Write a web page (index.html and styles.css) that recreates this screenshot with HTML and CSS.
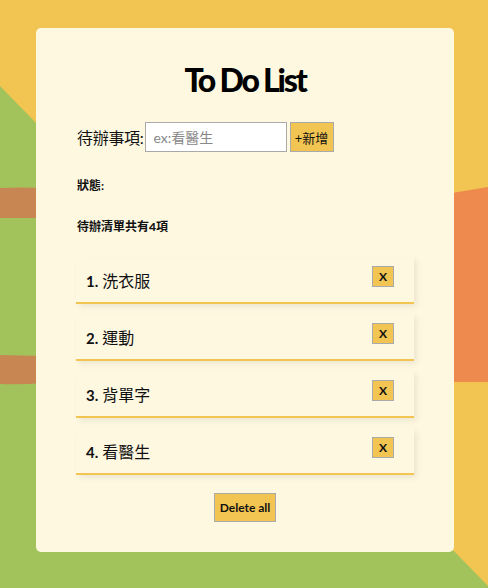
FILE: index.html
```html
<!DOCTYPE html>
<html lang="zh-Hant">
<head>
<meta charset="utf-8">
<title>To Do List</title>
<link rel="stylesheet" href="styles.css">
</head>
<body>
<svg class="backdrop" width="488" height="588" viewBox="0 0 488 588" aria-hidden="true">
  <rect x="0" y="0" width="488" height="588" fill="#f2c451"/>
  <polygon points="0,86 488,586 488,588 0,588" fill="#a2c35b"/>
  <path d="M0,188 Q20,187 44,188 L44,218 L0,218 Z" fill="#c88752"/>
  <path d="M0,355 L44,356 L44,383 Q20,385 0,384 Z" fill="#c88752"/>
  <polygon points="440,195 488,187 488,382 440,382" fill="#ee8a4e"/>
</svg>
<main class="card">
  <h1 class="title">To Do List</h1>
  <form class="add-row">
    <label class="add-label" for="todo">待辦事項:</label>
    <input class="add-input" id="todo" type="text" placeholder="ex:看醫生">
    <button class="btn add-btn" type="button">+新增</button>
  </form>
  <p class="status">狀態:</p>
  <p class="count">待辦清單共有<b>4</b>項</p>
  <ul class="list">
    <li class="item"><span class="item-text"><b>1.</b> 洗衣服</span><button class="btn del-btn" type="button">X</button></li>
    <li class="item"><span class="item-text"><b>2.</b> 運動</span><button class="btn del-btn" type="button">X</button></li>
    <li class="item"><span class="item-text"><b>3.</b> 背單字</span><button class="btn del-btn" type="button">X</button></li>
    <li class="item"><span class="item-text"><b>4.</b> 看醫生</span><button class="btn del-btn" type="button">X</button></li>
  </ul>
  <div class="footer">
    <button class="btn clear-btn" type="button">Delete all</button>
  </div>
</main>
</body>
</html>
```
FILE: styles.css
```css
* { box-sizing: border-box; }
html, body {
  margin: 0;
  padding: 0;
  width: 488px;
  height: 588px;
  overflow: hidden;
}
body {
  position: relative;
  font-family: Lato, "Noto Sans CJK TC", sans-serif;
  color: #111;
  padding-top: 28px;
}
.backdrop {
  position: absolute;
  left: 0;
  top: 0;
  z-index: 0;
}
.card {
  position: relative;
  z-index: 1;
  width: 418px;
  height: 524px;
  margin-left: 36px;
  background: #fef8e1;
  border-radius: 5px;
  padding: 32px 40px 0 40px;
}
.title {
  margin: 0;
  text-align: center;
  font-size: 32px;
  font-weight: 900;
  line-height: 40px;
  letter-spacing: -2.2px;
  color: #000;
}
.add-row {
  display: flex;
  align-items: center;
  margin-top: 22px;
  height: 30px;
}
.add-label {
  font-size: 16px;
  margin-left: 1px;
  margin-right: 1px;
  letter-spacing: -0.3px;
}
.add-input {
  width: 142px;
  height: 30px;
  border: 1px solid #aaa;
  background: #fff;
  padding: 0 8px;
  font-family: Lato, "Noto Sans CJK TC", sans-serif;
  font-size: 14px;
  margin: 0;
  outline: none;
}
.add-input::placeholder { color: #888; }
.btn {
  background: #f2c451;
  border: 1px solid #aaa;
  font-family: Lato, "Noto Sans CJK TC", sans-serif;
  color: #111;
  padding: 0;
  margin: 0;
  cursor: pointer;
}
.add-btn {
  width: 44px;
  height: 30px;
  margin-left: 3px;
  font-size: 13px;
}
.status {
  margin: 26px 0 0 1px;
  font-size: 12px;
  font-weight: 700;
  line-height: 16px;
}
.count {
  margin: 25px 0 0 1px;
  font-size: 12px;
  font-weight: 700;
  line-height: 16px;
}
.list {
  list-style: none;
  margin: 22px 0 0 0;
  padding: 0;
}
.item {
  display: flex;
  justify-content: space-between;
  align-items: flex-start;
  height: 47px;
  margin-bottom: 10px;
  padding: 9px 20px 0 10px;
  border-bottom: 2px solid #f2c451;
  box-shadow: 3px 3px 6px rgba(0, 0, 0, 0.07);
}
.item-text {
  font-size: 16px;
  line-height: 20px;
  margin-top: 5px;
}
.item-text b { font-size: 15px; }
.del-btn {
  width: 22px;
  height: 21px;
  font-size: 12px;
  font-weight: 700;
}
.footer {
  display: flex;
  justify-content: center;
  margin-top: 18px;
}
.clear-btn {
  width: 62px;
  height: 29px;
  font-size: 12px;
  font-weight: 700;
}
```
